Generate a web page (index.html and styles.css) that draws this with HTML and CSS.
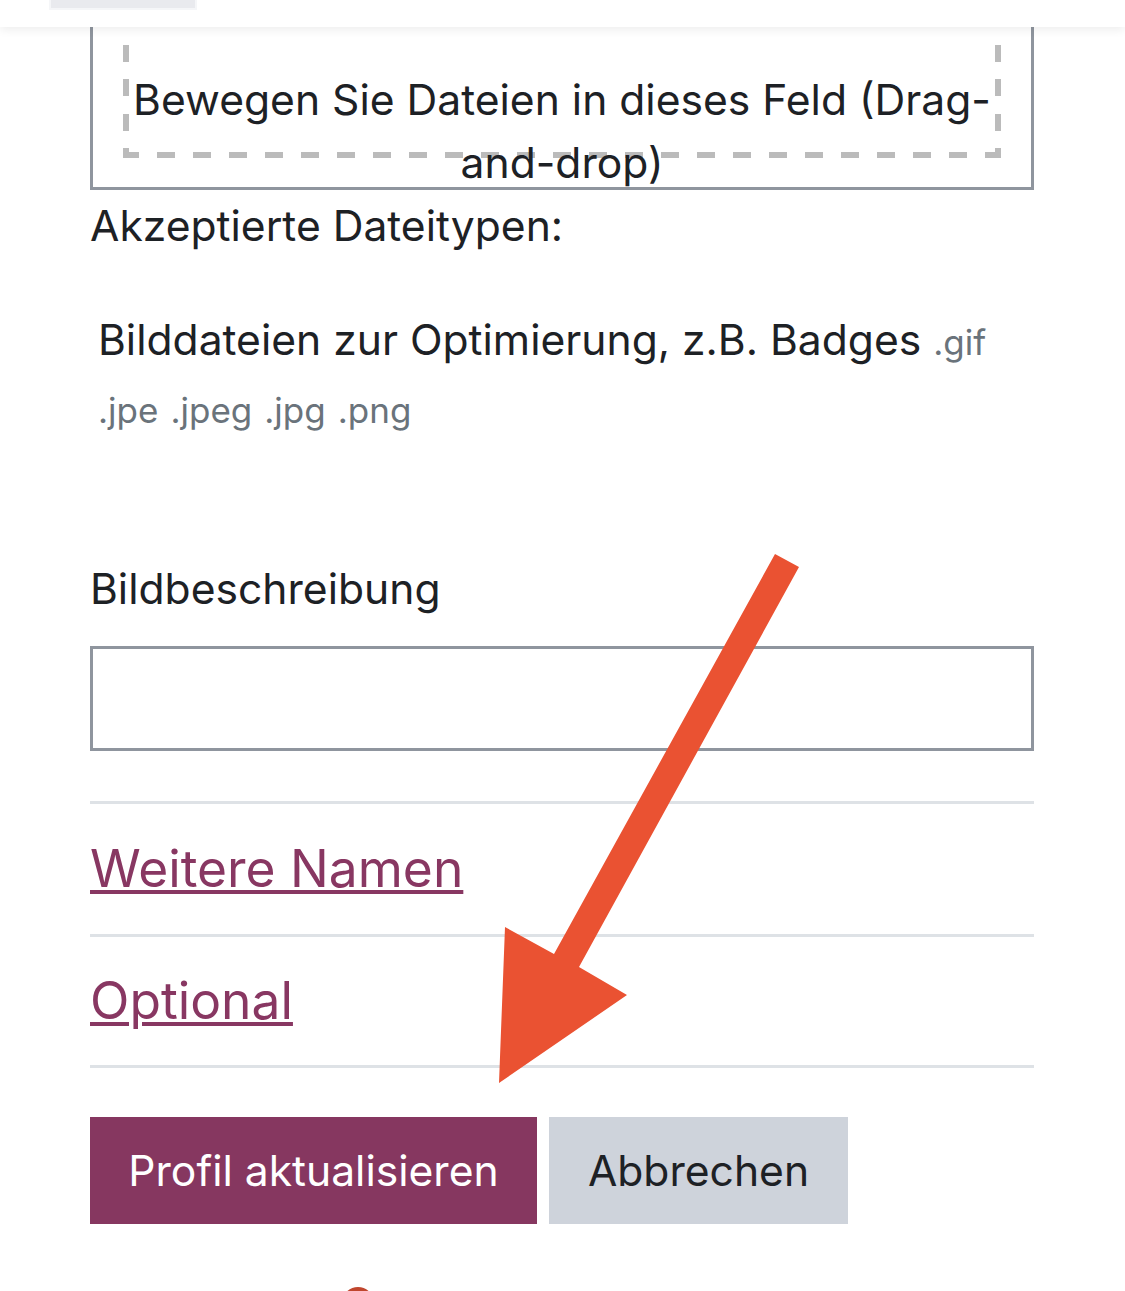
FILE: index.html
```html
<!DOCTYPE html>
<html lang="de">
<head>
<meta charset="utf-8">
<title>Profil bearbeiten</title>
<link rel="stylesheet" href="styles.css">
</head>
<body>
<header class="topbar"><span class="topbar-tab"></span></header>
<main class="page">
  <div class="filemanager">
    <div class="dropzone">Bewegen Sie Dateien in dieses Feld (Drag-and-drop)</div>
  </div>
  <p class="accepted-label">Akzeptierte Dateitypen:</p>
  <ul class="filetypes">
    <li>Bilddateien zur Optimierung, z.B. Badges <span class="ext">.gif</span> <span class="ext">.jpe</span> <span class="ext">.jpeg</span> <span class="ext">.jpg</span> <span class="ext">.png</span></li>
  </ul>
  <label class="field-label" for="imagealt">Bildbeschreibung</label>
  <input class="field-input" id="imagealt" type="text">
  <div class="section first"><a href="#" class="section-link">Weitere Namen</a></div>
  <div class="section"><a href="#" class="section-link">Optional</a></div>
  <div class="actions">
    <button class="btn btn-primary" type="button">Profil aktualisieren</button>
    <button class="btn btn-secondary" type="button">Abbrechen</button>
  </div>
  <div class="red-dot"></div>
</main>
<svg class="annotation" width="1125" height="1291" viewBox="0 0 1125 1291" aria-hidden="true">
  <polygon fill="#ea5232" points="775,554 799,567 579,967 627,995 499,1083 505,927 554,954"/>
</svg>
</body>
</html>
```
FILE: styles.css
```css
html, body {
  margin: 0;
  padding: 0;
  background: #fff;
}
body {
  font-family: Inter, "Noto Sans", "Liberation Sans", sans-serif;
  color: #1d2125;
  width: 1125px;
  height: 1291px;
  overflow: hidden;
  position: relative;
}
.topbar {
  position: absolute;
  top: 0;
  left: 0;
  right: 0;
  height: 27px;
  background: #fff;
  box-shadow: 0 3px 10px rgba(0, 0, 0, 0.07);
  z-index: 2;
  padding-left: 49px;
  box-sizing: border-box;
}
.topbar-tab {
  display: block;
  width: 144px;
  height: 8px;
  background: #e9eaee;
  border: 2px solid #f5f6f8;
  border-top: none;
}
.page {
  padding-left: 90px;
  width: 944px;
}
.filemanager {
  border: 3px solid #8f959e;
  padding: 6px 30px 29px;
  box-sizing: border-box;
  height: 190px;
}
.dropzone {
  height: 149px;
  box-sizing: border-box;
  text-align: center;
  font-size: 42.6px;
  line-height: 63px;
  padding-top: 59px;
  background-color: transparent;
  background-image:
    repeating-linear-gradient(to right, #bbb -2px, #bbb 16px, transparent 16px, transparent 34px),
    repeating-linear-gradient(to right, #bbb -2px, #bbb 16px, transparent 16px, transparent 34px),
    repeating-linear-gradient(to bottom, #bbb 1.5px, #bbb 18.5px, transparent 18.5px, transparent 36px),
    repeating-linear-gradient(to bottom, #bbb 1.5px, #bbb 18.5px, transparent 18.5px, transparent 36px);
  background-size: 100% 6px, 100% 6px, 6px 100%, 6px 100%;
  background-position: left top, left bottom, left top, right top;
  background-repeat: no-repeat;
}
.accepted-label {
  margin: 4px 0 0;
  font-size: 42.6px;
  line-height: 63px;
}
.filetypes {
  list-style: none;
  margin: 49px 0 0;
  padding: 0 0 0 8px;
  font-size: 42.6px;
  line-height: 68px;
}
.ext {
  font-size: 35px;
  line-height: 1;
  color: #6a737b;
}
.field-label {
  display: block;
  margin-top: 115px;
  font-size: 42.6px;
  line-height: 63px;
}
.field-input {
  display: block;
  margin: 26px 0 0;
  width: 944px;
  height: 105px;
  box-sizing: border-box;
  border: 3px solid #8f959e;
  border-radius: 0;
  background: #fff;
  font: inherit;
  padding: 0 20px;
}
.section {
  border-top: 3px solid #dee2e6;
  height: 130px;
  display: flex;
  align-items: center;
}
.section.first {
  margin-top: 50px;
}
.section + .section {
  height: 128px;
}
.section-link {
  color: #883762;
  font-size: 51.5px;
  line-height: 1;
  text-decoration: underline;
  text-decoration-thickness: 3.5px;
  text-underline-offset: 3px;
}
.actions {
  display: flex;
  gap: 12px;
  border-top: 3px solid #dee2e6;
  padding-top: 49px;
}
.btn {
  border: none;
  border-radius: 0;
  height: 107px;
  font-family: inherit;
  font-size: 42.6px;
  padding: 0;
  margin: 0;
}
.btn-primary {
  background: #863760;
  color: #fff;
  width: 447px;
}
.btn-secondary {
  background: #ced3db;
  color: #1d2125;
  width: 299px;
}
.red-dot {
  width: 32px;
  height: 32px;
  border-radius: 50%;
  background: #c0462e;
  margin: 63px 0 0 252px;
}
.annotation {
  position: absolute;
  top: 0;
  left: 0;
  z-index: 3;
  pointer-events: none;
}
```
